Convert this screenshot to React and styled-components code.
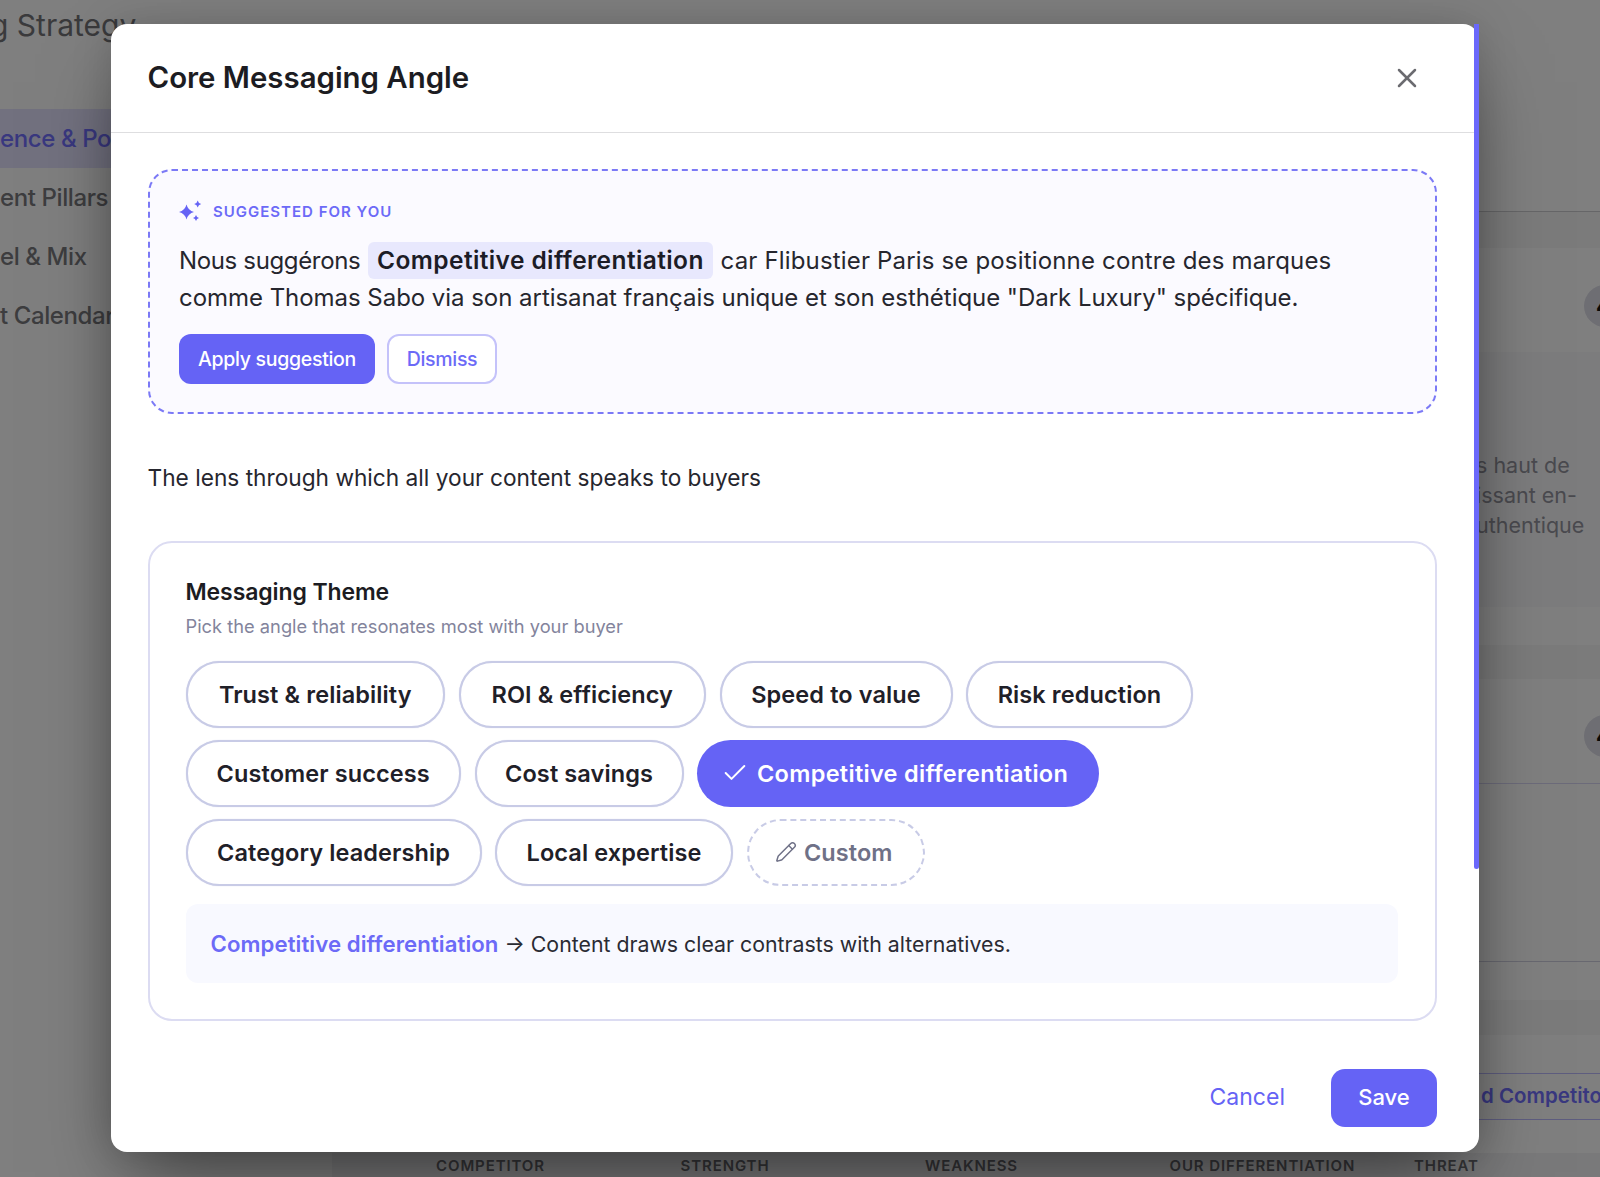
import React from 'react';
import styled, { createGlobalStyle } from 'styled-components';
import { Check, Pencil, X } from 'lucide-react';

const Global = createGlobalStyle`
  html, body { margin: 0; padding: 0; background: #fff; }
  * { box-sizing: border-box; }
  body { font-family: "Inter", "Liberation Sans", sans-serif; color: #22232b; }
  button { font-family: inherit; }
`;

const Page = styled.div`
  position: relative;
  height: 1177px;
  overflow: hidden;
  display: grid;
  grid-template-columns: 332px 1fr;
  background: #fff;
`;
const Side = styled.aside`
  display: flex;
  flex-direction: column;
`;
const PageTitle = styled.h1`
  margin: 0 0 59px -10px;
  height: 50px;
  font-size: 30px;
  line-height: 50px;
  font-weight: 400;
  color: #747478;
  white-space: nowrap;
`;
const NavItem = styled.div`
  height: 59px;
  display: flex;
  align-items: center;
  font-size: 24px;
  font-weight: 500;
  letter-spacing: -0.4px;
  white-space: nowrap;
  color: ${p => (p.$active ? '#7370ff' : '#7a7a7e')};
  background: ${p => (p.$active ? '#e4e2ff' : 'transparent')};
`;
const Main = styled.main`
  display: flex;
  flex-direction: column;
  min-width: 0;
`;
const Band = styled.div`
  height: ${p => p.$h}px;
  flex: none;
  background: ${p => p.$bg || '#fff'};
  border-bottom: ${p => (p.$line ? `1px solid ${p.$line}` : 'none')};
`;
const ScoreBand = styled(Band)`
  display: flex;
  justify-content: flex-end;
  align-items: center;
  padding-top: ${p => p.$shift}px;
`;
const Score = styled.div`
  width: 42px;
  height: 42px;
  margin-right: -26px;
  flex: none;
  border-radius: 50%;
  background: #dcdce6;
  color: #111;
  font-size: 22px;
  font-weight: 700;
  line-height: 42px;
  padding-left: 12px;
`;
const BlurbBand = styled(Band)`
  padding: 98px 0 0 1144px;
`;
const Blurb = styled.p`
  margin: 0;
  font-size: 21.5px;
  line-height: 30px;
  color: #94949e;
  white-space: nowrap;
`;
const AddCompetitor = styled.div`
  height: 47px;
  flex: none;
  display: flex;
  align-items: center;
  padding: 0 0 2px 1149px;
  border-top: 1px solid #bdbaff;
  border-bottom: 1px solid #bdbaff;
  color: #7370ff;
  font-size: 20.5px;
  font-weight: 600;
  white-space: nowrap;
`;
const TableHead = styled.div`
  height: 24px;
  margin-top: 33px;
  padding: 1px 0 0 104px;
  flex: none;
  display: grid;
  grid-template-columns: repeat(5, 244.5px);
  background: #f3f3f5;
  align-items: center;
`;
const TableLabel = styled.span`
  font-size: 15px;
  font-weight: 600;
  letter-spacing: 0.9px;
  color: #6c6c72;
  white-space: nowrap;
`;

const Backdrop = styled.div`
  position: absolute;
  inset: 0;
  background: rgba(0, 0, 0, 0.5);
`;
const Modal = styled.section`
  position: absolute;
  left: 111px;
  top: 24px;
  width: 1368px;
  height: 1128px;
  display: flex;
  flex-direction: column;
  background: #fff;
  border-radius: 16px;
  box-shadow: 0 39px 78px -19px rgba(0, 0, 0, 0.5), 0 0 40px rgba(0, 0, 0, 0.15);
`;
const Scrollbar = styled.div`
  position: absolute;
  right: 0;
  top: 0;
  width: 5.5px;
  height: 845px;
  background: #6a68fb;
  border-radius: 0 0 3px 3px;
`;
const Header = styled.header`
  height: 108.5px;
  flex: none;
  display: flex;
  align-items: center;
  justify-content: space-between;
  padding: 0 56px 0 36.5px;
  border-bottom: 1px solid #dedee0;
`;
const Title = styled.h2`
  margin: 0;
  font-size: 29.4px;
  font-weight: 600;
  color: #1c1c22;
`;
const CloseButton = styled.button`
  border: 0;
  padding: 0;
  background: none;
  color: #6b6b70;
  display: flex;
`;
const Body = styled.div`
  flex: 1;
  display: flex;
  flex-direction: column;
  padding: 36.5px 42px 25px 36.5px;
`;
const Suggestion = styled.div`
  height: 245px;
  flex: none;
  padding: 30px 30px 0 29.5px;
  background: #fbfaff;
  border: 2px dashed #7b79f6;
  border-radius: 24px;
`;
const SuggestLabel = styled.div`
  height: 20px;
  display: flex;
  align-items: center;
  gap: 11px;
  font-size: 15px;
  font-weight: 600;
  letter-spacing: 1px;
  color: #6c6af7;
`;
const SuggestText = styled.p`
  margin: 21px 0 0;
  font-size: 24px;
  line-height: 37px;
  letter-spacing: -0.04px;
  color: #26262e;
`;
const Opening = styled.span`
  letter-spacing: -0.35px;
`;
const Rest = styled.span`
  letter-spacing: 0.17px;
`;
const Highlight = styled.strong`
  display: inline-block;
  height: 37px;
  line-height: 37px;
  padding: 0 9px;
  margin: 0 1px;
  font-weight: 600;
  font-size: 24.5px;
  letter-spacing: 0.4px;
  color: #1c1c26;
  background: #e8e8fd;
  border-radius: 6px;
`;
const SuggestActions = styled.div`
  margin-top: 17.5px;
  display: flex;
  gap: 12px;
`;
const SmallButton = styled.button`
  height: 50px;
  width: ${p => p.$w}px;
  font-size: 19.5px;
  font-weight: 500;
  letter-spacing: -0.3px;
  border-radius: 12px;
  color: ${p => (p.$primary ? '#fff' : '#6c6af7')};
  background: ${p => (p.$primary ? '#6563f5' : '#fff')};
  border: ${p => (p.$primary ? '0' : '2px solid #c4c2fa')};
`;
const Lead = styled.p`
  margin: 47.5px 0;
  height: 32px;
  font-size: 22.7px;
  line-height: 32px;
  color: #26262e;
`;
const Card = styled.div`
  height: 480px;
  flex: none;
  padding: 34px 37px 0 36px;
  border: 2px solid #dcdcf2;
  border-radius: 24px;
`;
const CardTitle = styled.h3`
  margin: 0;
  font-size: 23px;
  line-height: 30px;
  font-weight: 600;
  letter-spacing: -0.1px;
  color: #1c1c22;
`;
const CardHint = styled.p`
  margin: 6px 0 22px;
  font-size: 18.3px;
  line-height: 26px;
  color: #83849c;
`;
const Chips = styled.div`
  display: flex;
  flex-wrap: wrap;
  gap: 12.5px 13.5px;
`;
const Chip = styled.button`
  width: ${p => p.$w}px;
  height: 66.5px;
  padding: ${p => (p.$selected ? '0 0 0 24px' : p.$custom ? '0 4px 0 0' : '0')};
  display: inline-flex;
  align-items: center;
  justify-content: ${p => (p.$selected ? 'flex-start' : 'center')};
  gap: ${p => (p.$selected ? 8 : 7)}px;
  border-radius: 34px;
  font-size: 23.5px;
  font-weight: 600;
  letter-spacing: ${p => (p.$selected ? 0.3 : 0.1)}px;
  white-space: nowrap;
  color: ${p => (p.$selected ? '#fff' : p.$custom ? '#6f7187' : '#1f2028')};
  background: ${p => (p.$selected ? '#6563f5' : '#fff')};
  border: ${p => (p.$selected ? '0' : `2px ${p.$custom ? 'dashed' : 'solid'} #c8cbe6`)};
  box-shadow: ${p => (p.$selected || p.$custom ? 'none' : '0 0 1px #c8cbe6')};
`;
const Note = styled.div`
  margin-top: 18.5px;
  height: 79px;
  display: flex;
  align-items: center;
  padding: 0 25px;
  background: #f8f9ff;
  border-radius: 12px;
  font-size: 21.3px;
  color: #2a2b33;
  white-space: pre;
`;
const NoteStrong = styled.span`
  font-size: 22.2px;
  font-weight: 600;
  letter-spacing: 0.07px;
  color: #6c6af7;
`;
const Footer = styled.footer`
  margin-top: auto;
  display: flex;
  align-items: center;
  justify-content: flex-end;
  gap: 46px;
`;
const CancelButton = styled.button`
  border: 0;
  padding: 0 0 2px;
  background: none;
  font-size: 23px;
  color: #6563f5;
`;
const SaveButton = styled.button`
  width: 106px;
  height: 58.5px;
  border: 0;
  padding: 0 0 2px;
  border-radius: 14px;
  background: #6563f5;
  color: #fff;
  font-size: 22px;
  font-weight: 500;
`;

const Sparkles = () => (
  <svg width="23" height="22" viewBox="0 0 23 22" fill="#6563f5" aria-hidden="true">
    <path d="M7.5 4.5Q9 10.5 15 12Q9 13.5 7.5 19.5Q6 13.5 0 12Q6 10.5 7.5 4.5Z" />
    <path d="M18.7.5Q19.3 3.4 22.2 4Q19.3 4.6 18.7 7.5Q18.1 4.6 15.2 4Q18.1 3.4 18.7.5Z" />
    <path d="M17 15Q17.6 17.4 20 18Q17.6 18.6 17 21Q16.4 18.6 14 18Q16.4 17.4 17 15Z" />
  </svg>
);

const chips = [
  ['Trust & reliability', 259.5],
  ['ROI & efficiency', 247.5],
  ['Speed to value', 233],
  ['Risk reduction', 227],
  ['Customer success', 275.5],
  ['Cost savings', 209],
  ['Competitive differentiation', 401.5, 'selected'],
  ['Category leadership', 296],
  ['Local expertise', 238],
  ['Custom', 178.5, 'custom'],
];

export default function App() {
  return (
    <>
      <Global />
      <Page>
        <Side>
          <PageTitle>g Strategy</PageTitle>
          <NavItem $active>ence &amp; Positioning</NavItem>
          <NavItem>ent Pillars</NavItem>
          <NavItem>el &amp; Mix</NavItem>
          <NavItem>t Calendar</NavItem>
        </Side>
        <Main>
          <Band $h={212} $line="#cdcdd0" />
          <Band $h={36} $bg="#f6f6f7" />
          <ScoreBand $h={104} $shift={12}><Score>4</Score></ScoreBand>
          <BlurbBand $h={255} $bg="#f9f9fa">
            <Blurb>s haut de</Blurb>
            <Blurb>issant en-</Blurb>
            <Blurb>uthentique</Blurb>
          </BlurbBand>
          <Band $h={38} />
          <Band $h={34} $bg="#f6f6f7" />
          <ScoreBand $h={105} $line="#d8d7f5" $shift={10}><Score>4</Score></ScoreBand>
          <Band $h={178} $line="#d0d0e0" />
          <Band $h={38} />
          <Band $h={35} $bg="#f6f6f7" />
          <Band $h={38} />
          <AddCompetitor>d Competitor</AddCompetitor>
          <TableHead>
            <TableLabel>COMPETITOR</TableLabel>
            <TableLabel>STRENGTH</TableLabel>
            <TableLabel>WEAKNESS</TableLabel>
            <TableLabel>OUR DIFFERENTIATION</TableLabel>
            <TableLabel>THREAT</TableLabel>
          </TableHead>
        </Main>
        <Backdrop />
        <Modal>
          <Scrollbar />
          <Header>
            <Title>Core Messaging Angle</Title>
            <CloseButton aria-label="Close"><X size={32} strokeWidth={1.9} /></CloseButton>
          </Header>
          <Body>
            <Suggestion>
              <SuggestLabel><Sparkles />SUGGESTED FOR YOU</SuggestLabel>
              <SuggestText>
                <Opening>Nous suggérons</Opening> <Highlight>Competitive differentiation</Highlight> <Rest>car Flibustier Paris se positionne contre des marques</Rest> comme Thomas Sabo via son artisanat français unique et son esthétique "Dark Luxury" spécifique.
              </SuggestText>
              <SuggestActions>
                <SmallButton $primary $w={196}>Apply suggestion</SmallButton>
                <SmallButton $w={110}>Dismiss</SmallButton>
              </SuggestActions>
            </Suggestion>
            <Lead>The lens through which all your content speaks to buyers</Lead>
            <Card>
              <CardTitle>Messaging Theme</CardTitle>
              <CardHint>Pick the angle that resonates most with your buyer</CardHint>
              <Chips>
                {chips.map(([label, w, kind]) => (
                  <Chip key={label} $w={w} $selected={kind === 'selected'} $custom={kind === 'custom'}>
                    {kind === 'selected' && <Check size={28} strokeWidth={1.7} />}
                    {kind === 'custom' && <Pencil size={22} strokeWidth={1.6} />}
                    {label}
                  </Chip>
                ))}
              </Chips>
              <Note><NoteStrong>Competitive differentiation</NoteStrong> → Content draws clear contrasts with alternatives.</Note>
            </Card>
            <Footer>
              <CancelButton>Cancel</CancelButton>
              <SaveButton>Save</SaveButton>
            </Footer>
          </Body>
        </Modal>
      </Page>
    </>
  );
}
